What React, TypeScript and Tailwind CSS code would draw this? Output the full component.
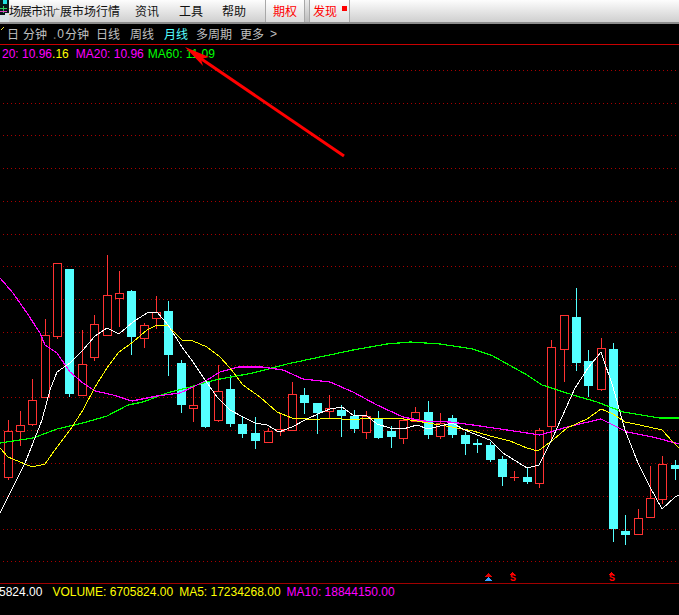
const CJK = "font-['Noto_Sans_CJK_SC',sans-serif]";
const ARIAL = "font-['Liberation_Sans',Arial,sans-serif]";

type C = [number, number, number, number, number, number];
// x, high, low, top, bottom, rising(1=red hollow, 0=cyan filled)
const candles: C[] = [
  [8, 420, 480, 431, 477, 1], [20, 411, 446, 425, 431, 1], [32, 379, 426, 400, 424, 1], [45, 319, 397, 335, 397, 1],
  [57, 263, 339, 263, 336, 1], [69, 269, 397, 269, 394, 0], [82, 330, 395, 364, 395, 1], [94, 315, 361, 324, 357, 1],
  [107, 255, 335, 295, 335, 1], [119, 271, 327, 293, 298, 1], [131, 290, 355, 291, 337, 0], [144, 323, 348, 325, 338, 1],
  [156, 296, 329, 312, 318, 1], [168, 301, 376, 311, 355, 0], [181, 360, 413, 363, 405, 0], [193, 387, 422, 405, 408, 1],
  [205, 381, 428, 382, 427, 0], [218, 365, 422, 391, 420, 1], [230, 375, 427, 389, 424, 0], [242, 417, 438, 424, 434, 0],
  [255, 417, 449, 433, 441, 0], [268, 428, 443, 431, 442, 1], [280, 413, 436, 429, 431, 1], [292, 382, 430, 394, 430, 1],
  [304, 388, 414, 395, 403, 0], [317, 403, 434, 403, 413, 0], [329, 395, 419, 408, 411, 1], [341, 405, 437, 410, 416, 0],
  [354, 410, 433, 416, 429, 0], [366, 411, 439, 416, 432, 1], [378, 411, 439, 418, 438, 0], [391, 426, 448, 431, 437, 0],
  [403, 417, 444, 420, 438, 1], [415, 407, 422, 412, 421, 1], [428, 401, 439, 412, 435, 0], [440, 413, 439, 423, 436, 1],
  [452, 415, 438, 418, 435, 0], [465, 432, 455, 435, 444, 0], [477, 439, 453, 443, 445, 0], [490, 442, 462, 445, 460, 0],
  [502, 456, 486, 459, 477, 0], [514, 471, 481, 477, 477, 1], [527, 468, 484, 477, 482, 0], [539, 428, 488, 430, 483, 1],
  [551, 340, 439, 347, 426, 1], [564, 315, 382, 315, 349, 1], [576, 288, 371, 317, 363, 0], [588, 350, 397, 361, 386, 0],
  [601, 338, 391, 348, 389, 1], [613, 343, 542, 349, 529, 0], [625, 515, 545, 531, 535, 0], [638, 509, 535, 518, 534, 1],
  [650, 466, 518, 498, 517, 1], [662, 456, 504, 464, 499, 1], [675, 460, 480, 465, 469, 0],
];

const green = "0,443 33,438 57,429 83,423 107,416 128,405 143,402 167,393 187,388 207,382 220,379 253,373 287,364 320,357 353,350 387,344 410,342 440,344 473,349 493,356 527,375 542,385 573,395 597,402 623,412 660,418 679,418";
const magenta = "0,278 13,293 27,313 40,333 45,345 57,353 70,372 83,383 95,391 113,395 132,401 157,396 180,393 193,387 207,380 220,372 238,367 262,367 283,370 303,379 330,382 353,392 377,405 403,417 423,421 450,422 473,425 507,430 540,435 567,427 601,419 627,432 653,437 679,444";
const yellow = "0,448 8,457 20,462 32,467 45,464 57,447 70,430 83,410 95,387 107,368 119,352 133,342 147,330 157,325 168,326 182,340 193,341 207,347 220,357 230,368 243,385 260,397 277,412 292,418 307,419 320,419 330,418 353,420 367,418 397,418 417,421 428,423 452,427 473,431 490,436 510,441 527,448 538,451 553,440 567,428 587,419 601,409 613,414 625,422 640,425 662,430 673,442 679,448";
const white = "0,513 25,463 33,443 42,420 50,390 57,372 70,363 83,350 95,336 107,328 119,334 133,322 147,313 157,312 168,325 182,347 193,362 203,377 217,397 230,410 243,417 255,423 267,425 279,432 292,427 307,419 320,413 330,409 342,407 353,415 367,416 377,424 390,428 403,429 417,425 428,429 440,426 452,423 465,430 477,435 490,440 503,453 527,468 539,465 553,437 575,388 588,368 601,352 613,387 625,430 638,463 650,487 662,509 675,497 679,495";

const grid = [70, 103, 135, 168, 201, 234, 266, 299, 332, 365, 397, 430, 463, 496, 529, 561];

function Chart() {
  return (
    <svg viewBox="0 45 679 538" width={679} height={538} className="block" shapeRendering="crispEdges">
      {grid.map((y) => (
        <line key={y} x1={3} x2={677} y1={y + 0.5} y2={y + 0.5} stroke="#a80000" strokeWidth={1} strokeDasharray="1 3" />
      ))}
      {candles.map(([x, hi, lo, top, bot, up]) =>
        up ? (
          <g key={x} fill="#ff3232">
            <rect x={x} y={hi} width={1} height={Math.max(top - hi, 0)} />
            <rect x={x} y={bot} width={1} height={Math.max(lo - bot, 0)} />
            <rect x={x - 4 + 0.5} y={top + 0.5} width={8} height={Math.max(bot - top, 0.01)} fill="#000" stroke="#ff3232" strokeWidth={1} />
          </g>
        ) : (
          <g key={x} fill="#54ffff">
            <rect x={x} y={hi} width={1} height={lo - hi} />
            <rect x={x - 4} y={top} width={9} height={bot - top} />
          </g>
        ),
      )}
      <polyline points={green} fill="none" stroke="#00ff00" strokeWidth={1.2} />
      <polyline points={magenta} fill="none" stroke="#ff00ff" strokeWidth={1.2} />
      <polyline points={yellow} fill="none" stroke="#ffff00" strokeWidth={1} />
      <polyline points={white} fill="none" stroke="#ffffff" strokeWidth={1} />
      <polygon points="488.5,573 484,577 493,577" fill="#e00000" />
      <polygon points="488.5,577 484,581 493,581" fill="#3aa0ff" />
      <polygon points="512.5,572 510,575 515,575" fill="#ff0000" />
      <polygon points="611.5,572 609,575 614,575" fill="#ff0000" />
    </svg>
  );
}

function Arrow() {
  return (
    <svg viewBox="0 0 679 615" width={679} height={615} className="absolute left-0 top-0 pointer-events-none">
      <line x1={344} y1={156} x2={200} y2={58} stroke="#ff0000" strokeWidth={3} />
      <polygon points="185,47 209,57 201,59 203,66" fill="#ff0000" />
      <line x1={1} y1={30} x2={4} y2={27} stroke="#e8e040" strokeWidth={1} />
    </svg>
  );
}

function Cell({ children, className = "" }: { children: React.ReactNode; className?: string }) {
  return <span className={`flex items-center ${className}`}>{children}</span>;
}

export default function App() {
  return (
    <div className={`relative w-[679px] h-[615px] overflow-hidden bg-black flex flex-col ${CJK}`}>
      {/* menu bar */}
      <div className="flex h-[24px] items-stretch border-b-2 border-[#8c8c8c] bg-gradient-to-b from-[#fdfdfd] to-[#cfcfcf] text-[12px] leading-none text-[#111]">
        <svg width={9} height={22} viewBox="0 0 9 22" className="shrink-0" shapeRendering="crispEdges">
          <rect width={9} height={22} fill="#061818" />
          <rect x={3} y={0} width={4} height={4} fill="#20e0e0" />
          <rect x={0} y={8} width={7} height={1} fill="#30d060" />
          <rect x={3} y={6} width={1} height={7} fill="#30d060" />
          <rect x={0} y={11} width={7} height={1} fill="#e040c0" />
          <rect x={5} y={13} width={4} height={9} fill="#d8e4e4" />
          <rect x={0} y={15} width={5} height={7} fill="#d8e4e4" />
        </svg>
        <Cell className="w-[126px]">
          <span className="tracking-[-1px]">场展市讯</span>
          <span className="w-[7px] text-[7px]">广</span>
          <span>展市场行情</span>
        </Cell>
        <Cell className="w-[44px]">资讯</Cell>
        <Cell className="w-[43px]">工具</Cell>
        <Cell className="w-[43px]">帮助</Cell>
        <Cell className="w-[39px] border-l border-l-[#a8a8a8] pl-[7px] text-[#ff0000] bg-gradient-to-b from-white to-[#dcdcdc]">期权</Cell>
        <Cell className="w-[6px] border-x border-x-[#a8a8a8] bg-gradient-to-b from-[#ececec] to-[#bcbcbc]"> </Cell>
        <Cell className="relative w-[40px] pl-[3px] text-[#ff0000] bg-gradient-to-b from-white to-[#dcdcdc] border-r border-r-[#a8a8a8]">
          发现
          <span className="absolute left-[32px] top-[6px] h-[5px] w-[5px] bg-[#ff0000]" />
        </Cell>
      </div>

      {/* period tabs */}
      <div className="flex h-[20px] items-center text-[12px] leading-none text-[#c0c0c0]">
        <span className="ml-[7px] w-[16px]">日</span>
        <span className="w-[30px]">分钟</span>
        <span className="w-[4px] text-[#707070]">.</span>
        <span className="w-[7px] text-right text-[#c0c0c0] font-['Liberation_Sans',sans-serif]">0</span>
        <span className="ml-[1px] w-[31px]">分钟</span>
        <span className="w-[34px]">日线</span>
        <span className="w-[34px]">周线</span>
        <span className="w-[32px] text-[#54ffff]">月线</span>
        <span className="w-[44px]">多周期</span>
        <span className="w-[30px]">更多</span>
        <span className="font-['Liberation_Sans',sans-serif]">&gt;</span>
      </div>
      <div className="h-px bg-[#c80000]" />

      {/* chart */}
      <div className="relative">
        <Chart />
        <div className={`absolute left-[2px] top-[2px] flex text-[12px] leading-[14px] ${ARIAL} whitespace-pre`}>
          <span className="text-[#ff00ff]">20: 10.96</span>
          <span className="text-[#ffff00]">.16</span>
          <span className="ml-[7px] text-[#ff00ff]">MA20: 10.96</span>
          <span className="ml-[4px] text-[#00ff00]">MA60: 11.09</span>
        </div>
        <span className="absolute left-[510px] top-[530px] text-[10px] leading-[8px] font-bold text-[#ff0000] font-['Liberation_Mono',monospace]">S</span>
        <span className="absolute left-[609px] top-[530px] text-[10px] leading-[8px] font-bold text-[#ff0000] font-['Liberation_Mono',monospace]">S</span>
      </div>
      <div className="h-px bg-[#a00000]" />

      {/* volume line */}
      <div className={`flex h-[31px] pt-[1px] -ml-[1px] text-[12px] leading-[14px] ${ARIAL} whitespace-pre`}>
        <span className="text-white">5824.00</span>
        <span className="ml-[10px] text-[#ffff00]">VOLUME: 6705824.00</span>
        <span className="ml-[6px] text-[#ffff00]">MA5: 17234268.00</span>
        <span className="ml-[6px] text-[#ff00ff]">MA10: 18844150.00</span>
      </div>
      <Arrow />
    </div>
  );
}
